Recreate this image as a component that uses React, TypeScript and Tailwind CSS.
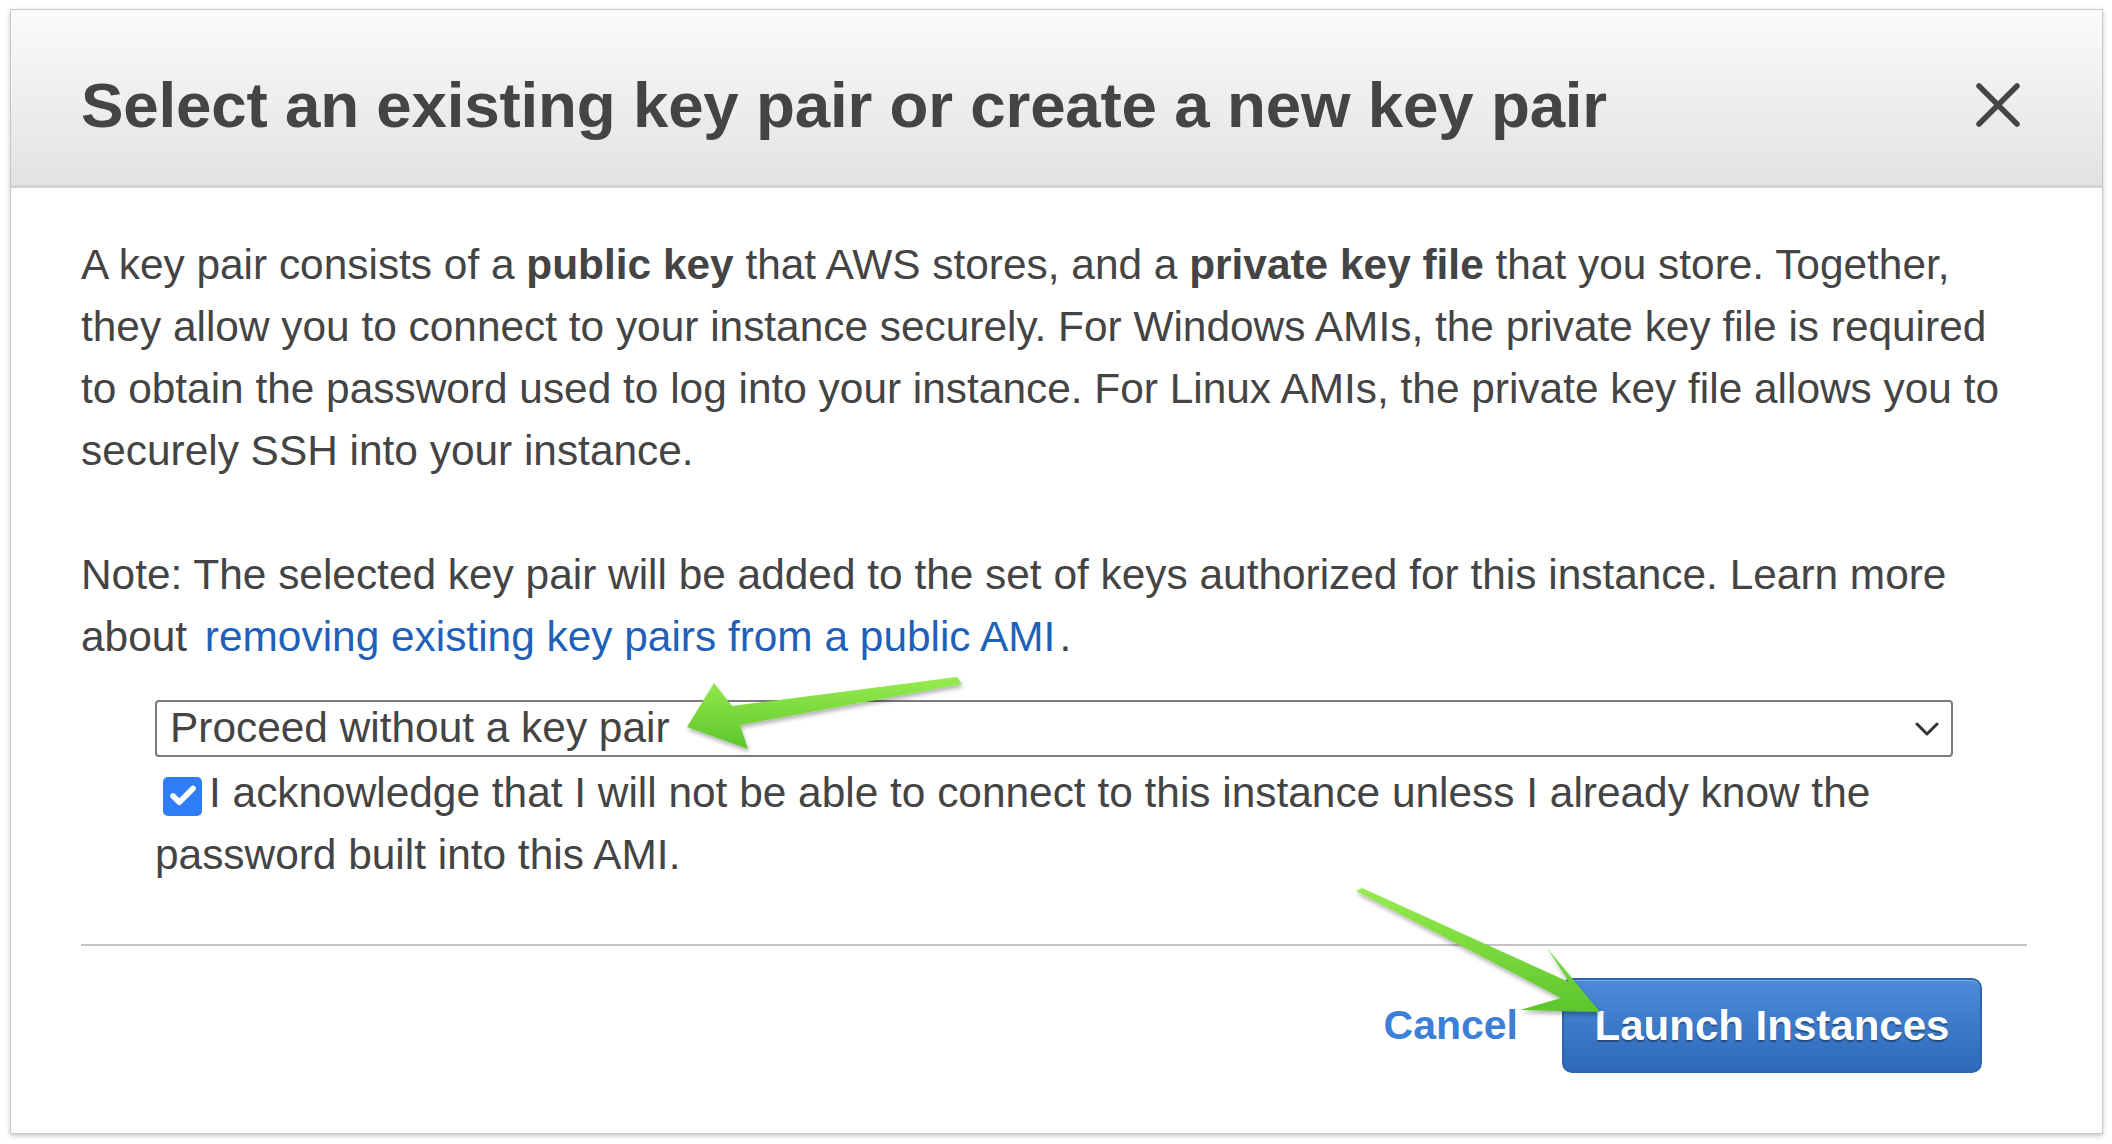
import { Check } from 'lucide-react';

function CloseIcon() {
  return (
    <svg width="44" height="44" viewBox="0 0 44 44" className="text-[#454545]">
      <path d="M3 3 L41 41 M41 3 L3 41" stroke="currentColor" strokeWidth="5.5" strokeLinecap="round" />
    </svg>
  );
}

function Chevron() {
  return (
    <svg width="24" height="16" viewBox="0 0 24 16" className="text-[#333]">
      <path d="M2 3 L12 13 L22 3" fill="none" stroke="currentColor" strokeWidth="3" strokeLinecap="round" strokeLinejoin="round" />
    </svg>
  );
}

// green annotation arrows drawn over the dialog
function Arrows() {
  return (
    <svg className="pointer-events-none absolute left-0 top-0" width="2112" height="1144" viewBox="0 0 2112 1144">
      <defs>
        <linearGradient id="g1" x1="0" y1="0" x2="0" y2="1">
          <stop offset="0" stopColor="#97ec4e" />
          <stop offset="1" stopColor="#5cc52c" />
        </linearGradient>
        <filter id="sh" x="-20%" y="-20%" width="140%" height="140%">
          <feDropShadow dx="1" dy="3" stdDeviation="2" floodColor="#000" floodOpacity="0.3" />
        </filter>
      </defs>
      <g filter="url(#sh)" fill="url(#g1)">
        <path d="M687 727 L714 683 L732 706 L957 677 L962 684 L740 725 L748 749 Z" strokeLinejoin="round" />
        <path d="M1356 891 L1362 888 L1569 982 L1547 948 L1600 1012 L1520 1010 L1561 998 Z" strokeLinejoin="round" />
      </g>
    </svg>
  );
}

export default function App() {
  return (
    <div className="relative min-h-screen w-[2112px] h-[1144px] bg-white pl-[10px] pt-[9px] font-['Liberation_Sans',Arial,sans-serif] text-[#444]">
      {/* Dialog */}
      <div className="flex h-[1125px] w-[2093px] flex-col border border-[#c9c9c9] bg-white shadow-[0_2px_5px_rgba(0,0,0,0.22)]">
        {/* Header */}
        <div className="flex h-[178px] items-center justify-between border-b-[3px] border-[#d4d4d4] bg-gradient-to-b from-[#fbfbfb] to-[#e2e2e2] pl-[70px] pr-[82px] pt-[14px]">
          <h1 className="text-[63.7px] font-bold leading-none tracking-[-0.2px]">Select an existing key pair or create a new key pair</h1>
          <CloseIcon />
        </div>

        {/* Body */}
        <div className="flex flex-1 flex-col pl-[70px] pr-[75px] pt-[46px]">
          <p className="whitespace-nowrap text-[42.4px] leading-[62px]">
            A key pair consists of a <b>public key</b> that AWS stores, and a <b>private key file</b> that you store. Together,
            <br />
            they allow you to connect to your instance securely. For Windows AMIs, the private key file is required
            <br />
            to obtain the password used to log into your instance. For Linux AMIs, the private key file allows you to
            <br />
            securely SSH into your instance.
          </p>
          <p className="mt-[62px] whitespace-nowrap text-[42.4px] leading-[62px]">
            Note: The selected key pair will be added to the set of keys authorized for this instance. Learn more
            <br />
            about <span className="ml-[6px] mr-[4px] text-[#1f61b9]">removing existing key pairs from a public AMI</span>.
          </p>

          <div className="ml-[74px] mt-[32px] w-[1798px]">
            <div className="flex h-[57px] items-center justify-between rounded-[4px] border-2 border-[#7a7a7a] pl-[13px] pr-[12px]">
              <span className="text-[42.4px] leading-none">Proceed without a key pair</span>
              <Chevron />
            </div>
            <p className="mt-[5px] text-[42.4px] leading-[62px]">
              <span className="ml-[8px] mr-[7px] inline-flex h-[39px] w-[39px] translate-y-[4px] items-center justify-center rounded-[5px] bg-[#2f7df6]">
                <Check className="h-[30px] w-[30px] text-white" strokeWidth={4.5} />
              </span>
              I acknowledge that I will not be able to connect to this instance unless I already know the
              <br />
              password built into this AMI.
            </p>
          </div>

          <div className="mt-[58px] h-[2px] w-[1946px] bg-[#c4c4c4]" />

          <div className="mt-[32px] flex items-center justify-end gap-[44px] pr-[45px]">
            <button className="text-[41px] font-bold text-[#3b7fd9]">Cancel</button>
            <button className="h-[95px] w-[420px] rounded-[10px] border-2 border-[#2c64ad] bg-gradient-to-b from-[#4b8cd8] to-[#2e69ba] text-[42px] font-bold text-white [text-shadow:0_2px_1px_rgba(0,0,0,0.35)] shadow-[inset_0_1px_0_rgba(255,255,255,0.3)]">
              Launch Instances
            </button>
          </div>
        </div>
      </div>
      <Arrows />
    </div>
  );
}
